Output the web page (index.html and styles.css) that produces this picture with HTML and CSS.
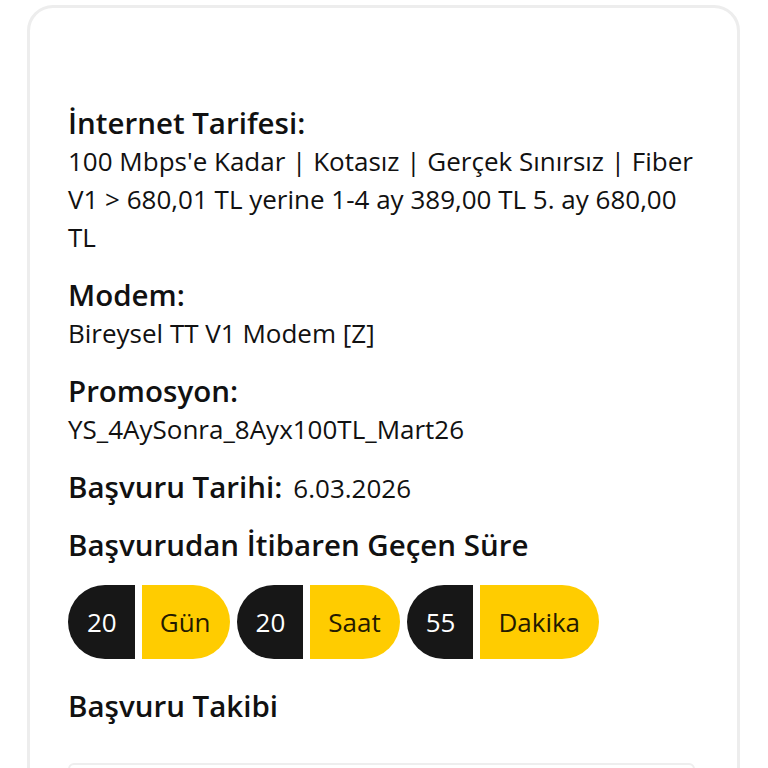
FILE: index.html
```html
<!DOCTYPE html>
<html lang="tr">
<head>
<meta charset="utf-8">
<link rel="stylesheet" href="styles.css">
</head>
<body>
<div class="card">
  <section class="field">
    <h3 class="label">İnternet Tarifesi:</h3>
    <p class="value">100 Mbps'e Kadar | Kotasız | Gerçek Sınırsız | Fiber V1 &gt; 680,01 TL yerine 1-4 ay 389,00 TL 5. ay 680,00 TL</p>
  </section>
  <section class="field">
    <h3 class="label">Modem:</h3>
    <p class="value">Bireysel TT V1 Modem [Z]</p>
  </section>
  <section class="field">
    <h3 class="label">Promosyon:</h3>
    <p class="value">YS_4AySonra_8Ayx100TL_Mart26</p>
  </section>
  <section class="field inline">
    <span class="label">Başvuru Tarihi:</span><span class="value">6.03.2026</span>
  </section>
  <section class="field">
    <h3 class="label">Başvurudan İtibaren Geçen Süre</h3>
    <div class="timer">
      <span class="num">20</span><span class="unit">Gün</span>
      <span class="num">20</span><span class="unit">Saat</span>
      <span class="num">55</span><span class="unit">Dakika</span>
    </div>
  </section>
  <h3 class="label track-title">Başvuru Takibi</h3>
  <div class="track-box"></div>
</div>
</body>
</html>
```
FILE: styles.css
```css
html, body {
  margin: 0;
  padding: 0;
  background: #ffffff;
}
body {
  font-family: "Open Sans", "Noto Sans", sans-serif;
  color: #111111;
  height: 768px;
  overflow: hidden;
}
.card {
  margin: 5px 28px 0 27px;
  border: 3px solid #ededed;
  border-radius: 26px;
  padding: 96px 40px 0 38px;
  height: 900px;
  box-sizing: border-box;
}
.field {
  margin: 0 0 20px 0;
}
.label {
  margin: 0;
  font-size: 29.5px;
  font-weight: 600;
  line-height: 38px;
  color: #111111;
}
.value {
  margin: 0;
  font-size: 26px;
  font-weight: 400;
  line-height: 38px;
  color: #111111;
}
.inline {
  display: flex;
  align-items: baseline;
  gap: 11px;
  height: 38px;
}
.timer {
  display: flex;
  gap: 7px;
  margin-top: 21px;
}
.num, .unit {
  display: flex;
  align-items: center;
  height: 74px;
  font-size: 26px;
  line-height: 1;
}
.num {
  background: #171717;
  color: #ffffff;
  border-radius: 37px 0 0 37px;
  padding: 0 18px 0 19px;
}
.unit {
  background: #ffcc00;
  color: #241a00;
  border-radius: 0 37px 37px 0;
  padding: 0 19px 0 18px;
}
.track-title {
  margin-top: 28px;
}
.track-box {
  margin-top: 38px;
  margin-right: 2px;
  height: 200px;
  border: 2px solid #eeeeee;
  border-radius: 6px;
}
```
